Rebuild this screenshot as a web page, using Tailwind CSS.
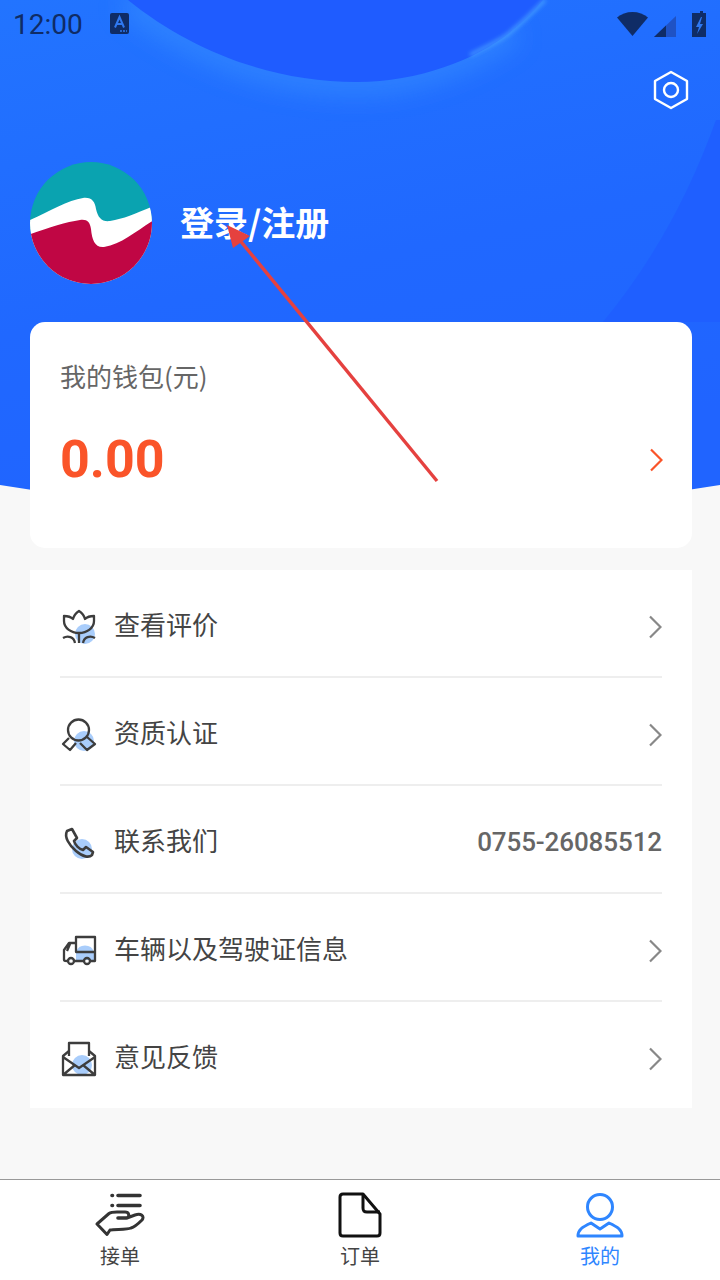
<!DOCTYPE html>
<html lang="zh-CN">
<head>
    <meta charset="UTF-8">
    <meta name="viewport" content="width=device-width, initial-scale=1.0">
    <title>我的</title>
    <script src="https://cdn.jsdelivr.net/npm/@tailwindcss/browser@4"></script>
</head>
<body class="m-0">
<div class="relative w-[720px] h-[1280px] overflow-hidden bg-[#f8f8f8] flex flex-col font-['Roboto','Noto_Sans_CJK_SC',sans-serif]">

    <!-- header background -->
    <svg class="absolute left-0 top-0" width="720" height="540" viewBox="0 0 720 540" fill="none">
        <defs>
            <linearGradient id="body" x1="0" y1="0" x2="0.3" y2="1">
                <stop offset="0" stop-color="#2274ff"/>
                <stop offset="0.6" stop-color="#2068ff"/>
                <stop offset="1" stop-color="#2064ff"/>
            </linearGradient>
            <filter id="soft" x="-20%" y="-50%" width="140%" height="200%"><feGaussianBlur stdDeviation="12"/></filter>
            <filter id="softer" x="-20%" y="-50%" width="140%" height="200%"><feGaussianBlur stdDeviation="2"/></filter>
        </defs>
        <path d="M0 0H720V485Q360 545 0 485Z" fill="url(#body)"/>
        <path d="M716 120Q675 235 603 322H720V120Z" fill="#1f5fff"/>
        <!-- glow under the curve -->
        <path d="M128 0C190 50 270 82 357 82C420 82 480 55 513 30" stroke="#3a92ff" stroke-width="26" opacity="0.55" filter="url(#soft)"/>
        <path d="M128 0C190 50 270 82 357 82C420 82 480 58 513 30C525 20 535 10 543 0H128Z" fill="#1f5cff"/>
        <path d="M470 55C490 45 505 38 513 30C525 20 535 10 545 0" stroke="#4aa4ff" stroke-width="3" filter="url(#softer)"/>
    </svg>

    <!-- status bar -->
    <div class="relative h-[50px] pl-[13px] pr-[14px] flex items-center text-[#0f2c66]">
        <span class="text-[28px] leading-none">12:00</span>
        <svg class="ml-[27px] -mt-[3px]" width="19" height="21" viewBox="0 0 19 21">
            <rect width="19" height="21" rx="2" fill="#0f2c66"/>
            <path d="M5 14.500 9.500 4 14 14.500M6.500 11h6" fill="none" stroke="#2f78f0" stroke-width="2"/>
            <path d="M10 18h2M13 18h2M16 18h1" stroke="#2f78f0" stroke-width="1.400"/>
        </svg>
        <svg class="ml-auto" width="90" height="28" viewBox="0 0 90 28">
            <path d="M1 6.500C9-1 24-1 32 6.500L16.500 25Z" fill="#0f2c66"/>
            <path d="M38 26 60 5V26Z" fill="#1f52c4"/>
            <path d="M38 26 50 14.500V26Z" fill="#0f2c66"/>
            <path d="M79 2h3V0h3v2h3V26h-14V2z" transform="translate(2 0)" fill="#0f2c66"/>
            <path d="M85 6 80 16h3l-2 7 6-10h-3l2-7z" fill="#2f78f0"/>
        </svg>
    </div>

    <!-- settings -->
    <div class="relative h-[80px] flex items-start justify-end pr-[31px] pt-[20px]">
        <svg width="36" height="40" viewBox="0 0 36 40" fill="none" stroke="#fff" stroke-width="2.400">
            <path d="M18 2 34 11V29L18 38 2 29V11Z" stroke-linejoin="round"/>
            <circle cx="18" cy="20" r="7"/>
        </svg>
    </div>

    <!-- profile -->
    <div class="relative pl-[30px] mt-[32px] flex items-center h-[122px]">
        <svg width="122" height="122" viewBox="0 0 122 122">
            <defs><clipPath id="avatarClip"><circle cx="61" cy="61" r="61"/></clipPath></defs>
            <g clip-path="url(#avatarClip)">
                <rect width="122" height="122" fill="#0aa3b0"/>
                <path d="M-2 59C18 50 38 38 53 36C62 35 65 40 66 47C68 56 72 60 80 59C94 57 106 51 124 44V122H-2Z" fill="#fff"/>
                <path d="M-2 73C18 66 36 60 50 58C57 57 60 60 61 67C62 78 65 86 74 85C92 82 106 69 124 58V122H-2Z" fill="#c00644"/>
            </g>
        </svg>
        <span class="ml-[28px] -mt-[2px] text-[34px] leading-none font-bold text-white font-['Noto_Sans_CJK_SC',sans-serif]">登录/注册</span>
    </div>

    <!-- wallet -->
    <div class="relative mt-[38px] ml-[30px] w-[662px] h-[226px] rounded-[15px] bg-white pl-[30px] pr-[29px] pt-[36px]">
        <div class="text-[26px] leading-[36px] text-[#666] font-['Noto_Sans_CJK_SC',sans-serif]">我的钱包(元)</div>
        <div class="mt-[33px] flex items-center justify-between">
            <span class="text-[52px] leading-[66px] font-bold text-[#fa5429]">0.00</span>
            <svg width="14" height="24" viewBox="0 0 14 24" fill="none" stroke="#fa5429" stroke-width="2.200"><path d="M2 1.500 12.500 12 2 22.500"/></svg>
        </div>
    </div>

    <!-- menu -->
    <div class="relative mt-[22px] ml-[30px] w-[662px] bg-white px-[30px] text-[26px] text-[#444] font-['Noto_Sans_CJK_SC',sans-serif]">
        <div class="h-[108px] flex items-center border-b-2 border-[#eeeeee]">
            <svg class="-ml-[1px] mt-[8px]" width="40" height="40" viewBox="0 0 40 40" fill="none" stroke="#3d3d3d" stroke-width="2.300">
                <circle cx="26" cy="27" r="10" fill="#a9cdfb" stroke="none"/>
                <path d="M5 9C9 9 12 10 14 12 15 8 17 6 20 4 23 6 25 8 26 12 28 10 31 9 35 9V14C35 21 28 26 20 26 12 26 5 21 5 14Z" stroke-linejoin="round"/>
                <path d="M20 26V36M4 31C9 28 15 30 16 36M36 31C31 28 25 30 24 36"/>
            </svg>
            <span class="ml-[15px]">查看评价</span>
            <svg class="ml-auto mt-[8px]" width="14" height="24" viewBox="0 0 14 24" fill="none" stroke="#888" stroke-width="2.200"><path d="M2 1.500 12.500 12 2 22.500"/></svg>
        </div>
        <div class="h-[108px] flex items-center border-b-2 border-[#eeeeee]">
            <svg class="-ml-[1px] mt-[8px]" width="40" height="40" viewBox="0 0 40 40" fill="none" stroke="#3d3d3d" stroke-width="2.300">
                <circle cx="25" cy="26" r="10" fill="#a9cdfb" stroke="none"/>
                <circle cx="19.500" cy="15" r="10.500"/>
                <path d="M10 23 4 29 11 35 17 28M28 22 36 29 28 35 21 28" stroke-linejoin="round"/>
            </svg>
            <span class="ml-[15px]">资质认证</span>
            <svg class="ml-auto mt-[8px]" width="14" height="24" viewBox="0 0 14 24" fill="none" stroke="#888" stroke-width="2.200"><path d="M2 1.500 12.500 12 2 22.500"/></svg>
        </div>
        <div class="h-[108px] flex items-center border-b-2 border-[#eeeeee]">
            <svg class="-ml-[1px] mt-[8px]" width="40" height="40" viewBox="0 0 40 40" fill="none" stroke="#3d3d3d" stroke-width="2.600">
                <circle cx="23" cy="26" r="10" fill="#a9cdfb" stroke="none"/>
                <path d="M8 8 13 6 18 15 15 18C16 22 20 26 24 27L27 24 34 29 33 32C30 35 24 34 17 28 10 22 5 14 8 8Z" stroke-linejoin="round"/>
            </svg>
            <span class="ml-[15px]">联系我们</span>
            <span class="ml-auto mt-[6px] font-['Roboto',sans-serif] font-medium text-[#666] tracking-[-0.1px]">0755-26085512</span>
        </div>
        <div class="h-[108px] flex items-center border-b-2 border-[#eeeeee]">
            <svg class="-ml-[1px] mt-[8px]" width="40" height="40" viewBox="0 0 40 40" fill="none" stroke="#3d3d3d" stroke-width="2.300">
                <path d="M17 21A9.500 9.500 0 0 1 35 21V29H17Z" fill="#a9cdfb" stroke="none"/>
                <path d="M17 6H36V21H17ZM17 12H10L5 19V29C5 30 6 30 9 30M15 30H25M31 30H36V21M11 13 8 20" stroke-linejoin="round"/>
                <circle cx="12" cy="30" r="3"/>
                <circle cx="28" cy="30" r="3"/>
            </svg>
            <span class="ml-[15px]">车辆以及驾驶证信息</span>
            <svg class="ml-auto mt-[8px]" width="14" height="24" viewBox="0 0 14 24" fill="none" stroke="#888" stroke-width="2.200"><path d="M2 1.500 12.500 12 2 22.500"/></svg>
        </div>
        <div class="h-[106px] flex items-center">
            <svg class="-ml-[1px] mt-[8px]" width="40" height="40" viewBox="0 0 40 40" fill="none" stroke="#3d3d3d" stroke-width="2.300">
                <circle cx="23" cy="26" r="10" fill="#a9cdfb" stroke="none"/>
                <path d="M10 17V4H30V17" stroke-linejoin="round"/>
                <path d="M10 12 4 17V36H36V17L30 12M4 18 20 29 36 18M4 36 16 26M36 36 24 26" stroke-linejoin="round"/>
            </svg>
            <span class="ml-[15px]">意见反馈</span>
            <svg class="ml-auto mt-[8px]" width="14" height="24" viewBox="0 0 14 24" fill="none" stroke="#888" stroke-width="2.200"><path d="M2 1.500 12.500 12 2 22.500"/></svg>
        </div>
    </div>

    <!-- bottom nav -->
    <div class="absolute left-0 right-0 bottom-0 h-[101px] bg-white border-t border-[#999] grid grid-cols-3 text-[20px] leading-[24px] text-[#444] font-['Noto_Sans_CJK_SC',sans-serif]">
        <div class="flex flex-col items-center pt-[12px]">
            <svg width="50" height="46" viewBox="0 0 50 46" fill="none" stroke="#333" stroke-width="3">
                <path d="M23 3.500H45M23 13.500H45" stroke-width="3.600" stroke-linecap="round"/>
                <path d="M17 3.500H17.500M17 13.500H17.500" stroke-width="3.600" stroke-linecap="round"/>
                <path d="M2 32 14 21.500C16 20 18 20 22 20H30C34 20 35 24 32 26L40 23C46 21 50 24 47 28 44 31 40 35 36 36 32 38 20 37 15 38L12 42.500Z" stroke-linejoin="round"/>
                <path d="M23 26H31" stroke-width="3.600" stroke-linecap="round"/>
            </svg>
            <span class="mt-[6px]">接单</span>
        </div>
        <div class="flex flex-col items-center pt-[12px]">
            <svg width="44" height="46" viewBox="0 0 44 46" fill="none" stroke="#111" stroke-width="3">
                <path d="M5 2H25L42 22V41C42 43 41 44 39 44H5C3 44 2 43 2 41V5C2 3 3 2 5 2Z" stroke-linejoin="round"/>
                <path d="M25 2V16C25 19 26 20 29 20H42"/>
            </svg>
            <span class="mt-[6px]">订单</span>
        </div>
        <div class="flex flex-col items-center pt-[12px] text-[#2f86ff]">
            <svg width="48" height="46" viewBox="0 0 48 46" fill="none" stroke="#2f86ff" stroke-width="3">
                <circle cx="24" cy="15" r="12.500"/>
                <path d="M2 44C2 38 6 35 15 31L24 37 33 31C42 35 46 38 46 44Z" stroke-linejoin="round"/>
            </svg>
            <span class="mt-[6px]">我的</span>
        </div>
    </div>

    <!-- annotation arrow -->
    <svg class="absolute left-0 top-0 pointer-events-none" width="720" height="500" viewBox="0 0 720 500" fill="none">
        <path d="M437 481 238 238" stroke="#e5413f" stroke-width="3.400"/>
        <path d="M227 225 250 236 233 248Z" fill="#e5413f"/>
    </svg>
</div>
</body>
</html>
